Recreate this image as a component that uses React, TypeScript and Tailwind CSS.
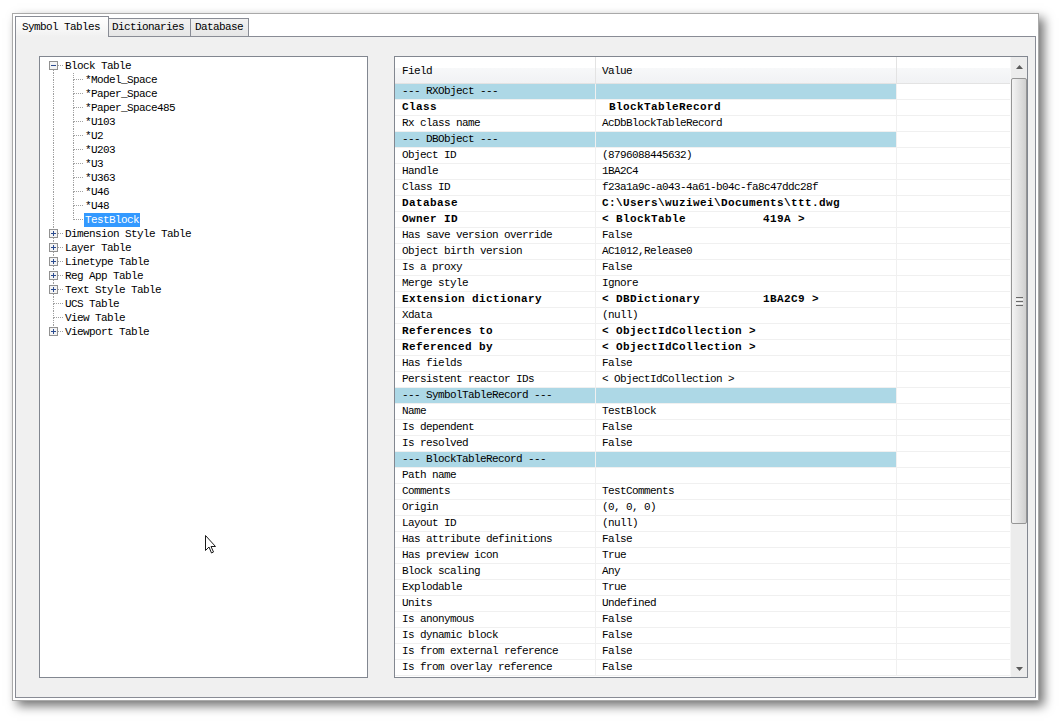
import React from "react";

// Tree connector cell: dotted lines + optional expand/collapse box
function Conn({ up, down, right, box }: { up?: boolean; down?: boolean; right?: boolean; box?: "plus" | "minus" }) {
  const line = { stroke: "#a0a0a0", strokeDasharray: "1 1", strokeWidth: 1 };
  return (
    <svg width="20" height="14" className="block shrink-0">
      {up && <line x1="9.5" y1="0" x2="9.5" y2={box ? 2 : 7} {...line} />}
      {down && <line x1="9.5" y1={box ? 11 : 7} x2="9.5" y2="14" {...line} />}
      {right && <line x1={box ? 14 : 10} y1="6.5" x2="20" y2="6.5" {...line} />}
      {box && (
        <>
          <rect x="5.5" y="2.5" width="8" height="8" fill="#f3f3f3" stroke="#919191" />
          <line x1="7" y1="6.5" x2="12" y2="6.5" stroke="#2b4b8f" />
          {box === "plus" && <line x1="9.5" y1="4" x2="9.5" y2="9" stroke="#2b4b8f" />}
        </>
      )}
    </svg>
  );
}

const children = ["*Model_Space", "*Paper_Space", "*Paper_Space485", "*U103", "*U2", "*U203", "*U3", "*U363", "*U46", "*U48", "TestBlock"];

const roots: { label: string; box?: "plus" | "minus" }[] = [
  { label: "Dimension Style Table", box: "plus" },
  { label: "Layer Table", box: "plus" },
  { label: "Linetype Table", box: "plus" },
  { label: "Reg App Table", box: "plus" },
  { label: "Text Style Table", box: "plus" },
  { label: "UCS Table" },
  { label: "View Table" },
  { label: "Viewport Table", box: "plus" },
];

type Row = [string, string, "s" | "b" | "n"];

const rows: Row[] = [
  ["--- RXObject ---", "", "s"],
  ["Class", " BlockTableRecord", "b"],
  ["Rx class name", "AcDbBlockTableRecord", "n"],
  ["--- DBObject ---", "", "s"],
  ["Object ID", "(8796088445632)", "n"],
  ["Handle", "1BA2C4", "n"],
  ["Class ID", "f23a1a9c-a043-4a61-b04c-fa8c47ddc28f", "n"],
  ["Database", "C:\\Users\\wuziwei\\Documents\\ttt.dwg", "b"],
  ["Owner ID", "< BlockTable           419A >", "b"],
  ["Has save version override", "False", "n"],
  ["Object birth version", "AC1012,Release0", "n"],
  ["Is a proxy", "False", "n"],
  ["Merge style", "Ignore", "n"],
  ["Extension dictionary", "< DBDictionary         1BA2C9 >", "b"],
  ["Xdata", "(null)", "n"],
  ["References to", "< ObjectIdCollection >", "b"],
  ["Referenced by", "< ObjectIdCollection >", "b"],
  ["Has fields", "False", "n"],
  ["Persistent reactor IDs", "< ObjectIdCollection >", "n"],
  ["--- SymbolTableRecord ---", "", "s"],
  ["Name", "TestBlock", "n"],
  ["Is dependent", "False", "n"],
  ["Is resolved", "False", "n"],
  ["--- BlockTableRecord ---", "", "s"],
  ["Path name", "", "n"],
  ["Comments", "TestComments", "n"],
  ["Origin", "(0, 0, 0)", "n"],
  ["Layout ID", "(null)", "n"],
  ["Has attribute definitions", "False", "n"],
  ["Has preview icon", "True", "n"],
  ["Block scaling", "Any", "n"],
  ["Explodable", "True", "n"],
  ["Units", "Undefined", "n"],
  ["Is anonymous", "False", "n"],
  ["Is dynamic block", "False", "n"],
  ["Is from external reference", "False", "n"],
  ["Is from overlay reference", "False", "n"],
];

const mono = "font-['Liberation_Mono',monospace] text-[11px] tracking-[-0.6px] text-black";

function Tree() {
  return (
    <div className="w-[329px] h-[622px] shrink-0 border border-[#828790] bg-white pt-[2px] pl-[4px]">
      <div className={`${mono} leading-[14px]`}>
        <div className="flex h-[14px] items-center">
          <Conn down right box="minus" />
          <span className="px-[1px]">Block Table</span>
        </div>
        {children.map((c, i) => {
          const last = i === children.length - 1;
          return (
            <div key={c} className="flex h-[14px] items-center">
              <Conn up down />
              <Conn up down={!last} right />
              <span className={`px-[1px] ${last ? "bg-[#3399ff] text-white" : ""}`}>{c}</span>
            </div>
          );
        })}
        {roots.map((r, i) => {
          const last = i === roots.length - 1;
          return (
            <div key={r.label} className="flex h-[14px] items-center">
              <Conn up down={!last} right box={r.box} />
              <span className="px-[1px]">{r.label}</span>
            </div>
          );
        })}
      </div>
    </div>
  );
}

function Arrow({ down }: { down?: boolean }) {
  return (
    <svg width="7" height="4" className="block">
      <path d={down ? "M0 0 H7 L3.5 4 Z" : "M3.5 0 L7 4 H0 Z"} fill="#5a5a5a" />
    </svg>
  );
}

function Scrollbar() {
  return (
    <div className="w-[17px] shrink-0 flex flex-col bg-[#ececec] border-l border-[#f7f7f7]">
      <div className="h-[19px] flex items-center justify-center">
        <Arrow />
      </div>
      <div className="mt-[2px] h-[446px] rounded-[2px] border border-[#959595] bg-[linear-gradient(to_right,#f4f4f4,#e2e2e2_50%,#cfcfcf)] flex flex-col items-center justify-center gap-[1px]">
        <div className="w-[7px] h-[1px] bg-[#6a6a6a]" />
        <div className="w-[7px] h-[1px] bg-[#f8f8f8]" />
        <div className="w-[7px] h-[1px] bg-[#6a6a6a]" />
        <div className="w-[7px] h-[1px] bg-[#f8f8f8]" />
        <div className="w-[7px] h-[1px] bg-[#6a6a6a]" />
      </div>
      <div className="flex-1" />
      <div className="h-[17px] flex items-center justify-center">
        <Arrow down />
      </div>
    </div>
  );
}

function PropertyGrid() {
  return (
    <div className="w-[634px] h-[622px] shrink-0 border border-[#828790] bg-white flex overflow-hidden">
      <div className={`flex-1 flex flex-col ${mono}`}>
        <div className="h-[27px] shrink-0 flex border-b border-[#e3e3e3] bg-[linear-gradient(to_bottom,#ffffff_0%,#ffffff_42%,#f7f8f9_43%,#f1f2f4_100%)]">
          <div className="w-[201px] shrink-0 border-r border-[#e3e3e3] pl-[7px] pt-[2px] flex items-center">Field</div>
          <div className="w-[301px] shrink-0 border-r border-[#e3e3e3] pl-[6px] pt-[2px] flex items-center">Value</div>
          <div className="flex-1" />
        </div>
        {rows.map(([f, v, k], i) => {
          const sec = k === "s";
          const weight = k === "b" ? "font-bold tracking-[0.4px]" : "";
          return (
            <div key={i} className="h-[16px] shrink-0 flex border-b border-[#f0f0f0]">
              <div className={`w-[201px] shrink-0 border-r border-[#f0f0f0] pl-[7px] flex items-center whitespace-pre ${sec ? "bg-[#add8e6]" : ""} ${weight}`}>
                {f}
              </div>
              <div className={`w-[301px] shrink-0 border-r border-[#f0f0f0] pl-[6px] flex items-center whitespace-pre ${sec ? "bg-[#add8e6]" : ""} ${weight}`}>
                {v}
              </div>
              <div className="flex-1" />
            </div>
          );
        })}
      </div>
      <Scrollbar />
    </div>
  );
}

export default function App() {
  return (
    <div className="relative w-[1060px] h-[722px] bg-white overflow-hidden pt-[13px] pl-[12px]">
      <div className="w-[1027px] h-[688px] border border-[#a9a9a9] bg-white p-[2px] flex flex-col shadow-[5px_5px_10px_rgba(0,0,0,0.55)]">
        {/* Tabs */}
        <div className={`h-[20px] shrink-0 flex items-end ${mono}`}>
          <div className="relative z-10 -mb-px h-[21px] w-[94px] border border-b-0 border-[#898c95] bg-[linear-gradient(to_bottom,#ffffff,#f7f7f7_60%,#f0f0f0)] pl-[6px] flex items-center">
            Symbol Tables
          </div>
          <div className="h-[18px] w-[82px] border border-b-0 border-l-0 border-[#898c95] bg-[linear-gradient(to_bottom,#f2f2f2,#e6e6e6)] pl-[3px] flex items-center">
            Dictionaries
          </div>
          <div className="h-[18px] w-[58px] border border-b-0 border-l-0 border-[#898c95] bg-[linear-gradient(to_bottom,#f2f2f2,#e6e6e6)] pl-[4px] flex items-center">
            Database
          </div>
        </div>
        {/* Tab page */}
        <div className="flex-1 border border-[#898c95] bg-[#f0f0f0] pl-[23px] pt-[19px] flex gap-[26px]">
          <Tree />
          <PropertyGrid />
        </div>
      </div>
      {/* mouse cursor */}
      <svg width="13" height="20" className="absolute left-[205px] top-[535px]">
        <path d="M0.5 0.5 L0.5 15.5 L4 12 L6.5 18 L8.5 17 L6 11.5 L10.5 11.5 Z" fill="#ffffff" stroke="#1a1a1a" strokeLinejoin="round" />
      </svg>
    </div>
  );
}
